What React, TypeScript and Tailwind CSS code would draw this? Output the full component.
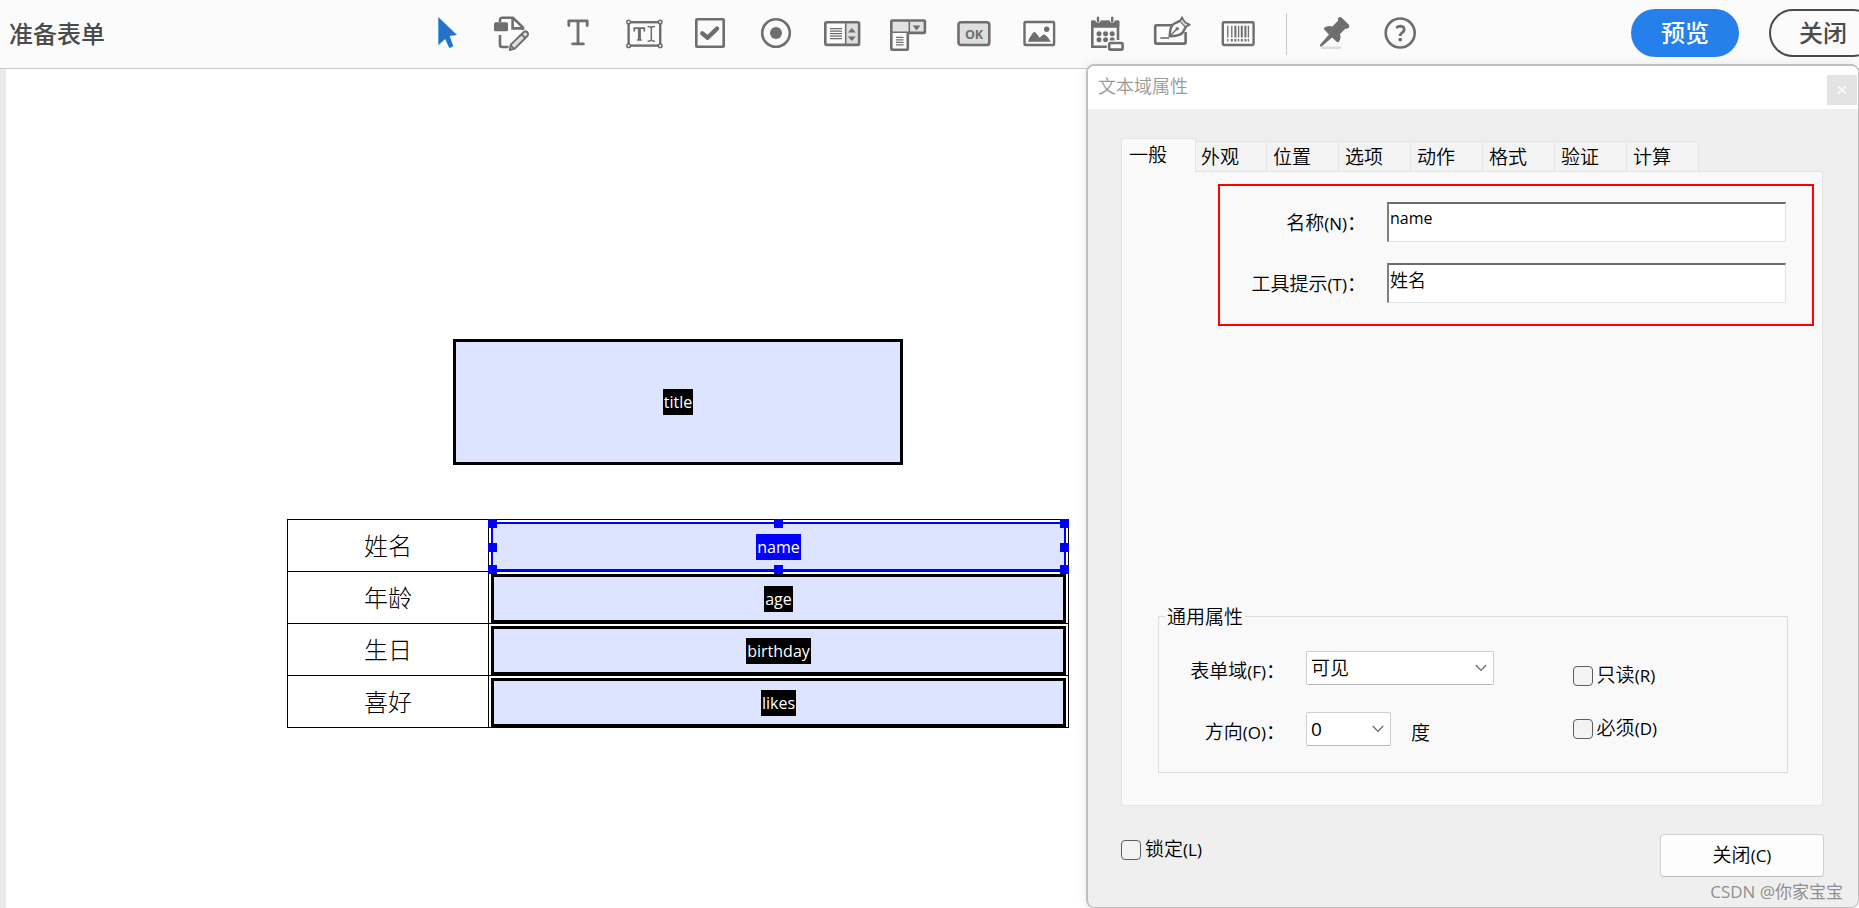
import { useId, useState } from "react";
import type { ReactNode } from "react";

const SANS = "font-['Open_Sans','Noto_Sans_CJK_SC',sans-serif]";

function Icon({ children }: { children: ReactNode }) {
  return (
    <svg viewBox="0 0 40 40" className="size-10" fill="none" stroke="#6e6e6e" strokeWidth="2.6" aria-hidden="true">
      {children}
    </svg>
  );
}

const dots = [12, 18.6, 25.2];

const tools: { label: string; icon: ReactNode }[] = [
  {
    label: "选择",
    icon: <path d="M11.3 3 L30 21 L22.7 22 L26.2 32 Q24.5 34.4 22 33.6 L18.2 25 L11.3 31.3 Z" fill="#2274cb" stroke="none" />,
  },
  {
    label: "编辑",
    icon: (
      <>
        <path d="M7 8 V6 Q7 3.8 9.3 3.8 H20 L30 13.6 V16 M19.6 4 V14.4 H29" />
        <rect x="1" y="8.3" width="14" height="9" rx="1.6" fill="#6e6e6e" stroke="none" />
        <path d="M7 21 V31 Q7 33 9 33 H15.5" />
        <path d="M16.8 36 L17.8 30.6 L30.8 18 Q32.6 16.6 34.4 18.3 Q35.8 20.2 34.6 21.8 L21.8 34.6 Z" fill="#dedede" strokeWidth="2" strokeLinejoin="round" />
        <path d="M28.6 20.4 L32.3 24 M17.6 31.4 L21 34.6" strokeWidth="1.8" />
      </>
    ),
  },
  {
    label: "添加文本",
    icon: (
      <path d="M9.8 11.5 V6.9 H28.2 V11.5 M19 7 V29.5 M13.6 29.9 H24.4" strokeWidth="2.8" strokeLinecap="round" strokeLinejoin="round" />
    ),
  },
  {
    label: "文本域",
    icon: (
      <>
        <rect x="3.6" y="8.2" width="31.6" height="23.4" strokeWidth="2.4" />
        <path d="M9.3 17.5 V14.2 H19.3 V17.5 M12 26 H16.8" strokeWidth="1.7" />
        <path d="M14.4 14.2 V26" strokeWidth="3" />
        <path d="M22.6 12.4 Q26.3 12.4 26.3 14 Q26.3 12.4 30 12.4 M22.6 27.3 Q26.3 27.3 26.3 25.6 Q26.3 27.3 30 27.3 M26.3 14 V26" strokeWidth="1.5" />
        <g fill="#fbfbfb" strokeWidth="1.5">
          <circle cx="3.6" cy="8" r="1.8" />
          <circle cx="35.2" cy="8" r="1.8" />
          <circle cx="3.6" cy="31.8" r="1.8" />
          <circle cx="35.2" cy="31.8" r="1.8" />
        </g>
      </>
    ),
  },
  {
    label: "复选框",
    icon: (
      <>
        <rect x="5.3" y="5.3" width="27.4" height="27.4" rx="0.8" />
        <path d="M11.3 19.4 L16.6 23.8 L26 14.6" strokeWidth="4.4" strokeLinejoin="round" strokeLinecap="round" />
      </>
    ),
  },
  {
    label: "单选按钮",
    icon: (
      <>
        <circle cx="19" cy="19" r="13.8" />
        <circle cx="19" cy="19" r="6" fill="#6e6e6e" stroke="none" />
      </>
    ),
  },
  {
    label: "列表框",
    icon: (
      <>
        <rect x="23" y="8" width="13" height="23" fill="#dedede" stroke="none" />
        <rect x="2.3" y="8.3" width="33.8" height="22.6" rx="1.5" />
        <path d="M22.7 8 V31" strokeWidth="1.6" />
        <path d="M7 14.6 H19 M7 17.1 H19 M7 19.6 H19 M7 22.1 H19 M7 24.6 H19" strokeWidth="1.2" />
        <path d="M28.8 14 L32.8 18.6 H24.8 Z M28.8 27 L24.8 22.4 H32.8 Z" fill="#6e6e6e" stroke="none" />
      </>
    ),
  },
  {
    label: "下拉列表",
    icon: (
      <>
        <rect x="2.3" y="6.5" width="33.6" height="12.4" rx="1" fill="#e2e2e2" />
        <path d="M20.3 6 V19" strokeWidth="1.6" />
        <path d="M27.5 16.4 L23.6 11.6 H31.4 Z" fill="#6e6e6e" stroke="none" />
        <path d="M2.3 18.9 V34.6 Q2.3 35.8 3.5 35.8 H17.6 Q18.8 35.8 18.8 34.6 V18.9" fill="#fbfbfb" />
        <path d="M7 23.4 H14.5 M7 25.9 H14.5 M7 28.4 H14.5 M7 30.9 H14.5" strokeWidth="1.2" />
      </>
    ),
  },
  {
    label: "按钮",
    icon: (
      <>
        <rect x="3.5" y="8.2" width="30.8" height="22.8" rx="2.6" fill="#dedede" />
        <text x="19" y="24.6" textAnchor="middle" fontSize="12.5" fontWeight="700" fill="#6e6e6e" stroke="none" fontFamily="'Open Sans', sans-serif">
          OK
        </text>
      </>
    ),
  },
  {
    label: "图像域",
    icon: (
      <>
        <rect x="3.5" y="8" width="29.6" height="23" rx="1" strokeWidth="2.4" />
        <circle cx="25.7" cy="15.3" r="2.7" fill="#6e6e6e" stroke="none" />
        <path d="M7 27.8 Q8 24 12 18.8 Q13.4 17.2 14.8 18.8 L18.6 23.8 L21.6 21 Q23 20 24.4 21 Q28.4 24.4 29.8 27.8 Z" fill="#6e6e6e" stroke="none" />
      </>
    ),
  },
  {
    label: "日期域",
    icon: (
      <>
        <path d="M20 32.8 H5.3 V8 H31 V26" />
        <rect x="4" y="6.4" width="28.3" height="7.4" rx="1" fill="#6e6e6e" stroke="none" />
        <circle cx="11" cy="6" r="2.6" fill="#fbfbfb" stroke="none" />
        <circle cx="25.2" cy="6" r="2.6" fill="#fbfbfb" stroke="none" />
        <path d="M11 3.6 V7 M25.2 3.6 V7" strokeWidth="2.4" strokeLinecap="round" />
        {dots.map((x) => (
          <g key={x} fill="#6e6e6e" stroke="none">
            <circle cx={x} cy="19.7" r="2.5" />
            <circle cx={x} cy="25.8" r="2.5" />
          </g>
        ))}
        <rect x="19.8" y="26.6" width="18" height="11.4" rx="2" fill="#fbfbfb" stroke="none" />
        <rect x="22.2" y="29" width="13.4" height="6.6" rx="1.4" strokeWidth="2.6" fill="#fbfbfb" />
      </>
    ),
  },
  {
    label: "签名域",
    icon: (
      <>
        <path d="M19 11.2 H3.5 Q2.2 11.2 2.2 12.5 V28.3 Q2.2 29.6 3.5 29.6 H31.3 Q32.6 29.6 32.6 28.3 V18" strokeWidth="2.6" />
        <path d="M7.3 24 H16" strokeWidth="1.6" />
        <path d="M16.6 22.4 Q17.2 12 20.6 10 L27.4 6.6 L32.8 12.8 L29.4 19 Q26 22 16.6 22.4 Z" fill="#fbfbfb" strokeWidth="2.4" strokeLinejoin="round" />
        <path d="M27.2 6.8 L29 3.2 Q31 9 36.8 10.6 L32.8 12.6" fill="#dedede" strokeWidth="1.8" strokeLinejoin="round" />
        <path d="M17 22 L23.6 15.2" strokeWidth="1.4" />
        <circle cx="24.2" cy="14.8" r="1.7" fill="#6e6e6e" stroke="none" />
      </>
    ),
  },
  {
    label: "条形码",
    icon: (
      <>
        <rect x="3.8" y="8.2" width="30.8" height="22.8" rx="1.2" strokeWidth="2.4" />
        <path d="M8.8 11.8 V23.4 M12.8 11.8 V23.4 M19.6 11.8 V23.4 M29.4 11.8 V23.4 M8.8 25 V27.6 M19.6 25 V27.6 M29.4 25 V27.6" strokeWidth="1.3" />
        <path d="M16.4 11.8 V23.4 M22.8 11.8 V23.4 M26.4 11.8 V23.4 M12.8 25 V27.6 M16.4 25 V27.6 M22.8 25 V27.6 M26.4 25 V27.6" strokeWidth="2" />
      </>
    ),
  },
];

const sideTools: { label: string; icon: ReactNode }[] = [
  {
    label: "保持工具选中",
    icon: (
      <>
        <path d="M8 33.8 H26" stroke="#dedede" strokeWidth="2.4" strokeLinecap="round" />
        <path
          d="M25 3.2 Q26.6 2.6 28 4 L34.6 10.6 Q35.8 12 35 13.6 Q33.4 15.2 31.6 14.4 L26 20 Q27.6 24.6 24.6 28 Q23.6 28.8 22.6 27.8 L18 23.4 L8 32.2 L5.8 32.6 L6.2 30.4 L15 20.4 L10.4 15.8 Q9.4 14.6 10.4 13.6 Q14 11 18.4 12.4 L24 6.8 Q23.4 4.6 25 3.2 Z"
          fill="#6e6e6e"
          stroke="none"
        />
      </>
    ),
  },
  {
    label: "帮助",
    icon: (
      <>
        <circle cx="20.2" cy="19" r="14.5" />
        <path d="M16.2 14 Q18 12.2 20.6 12.2 Q24.2 12.4 24.2 15.4 Q24.2 17.2 22.2 18.6 Q20.2 20 20.2 22" strokeWidth="2.8" />
        <circle cx="20.2" cy="25.6" r="1.9" fill="#6e6e6e" stroke="none" />
      </>
    ),
  },
];

function ToolButton({ label, children }: { label: string; children: ReactNode }) {
  return (
    <button type="button" aria-label={label} className="size-10 shrink-0">
      <Icon>{children}</Icon>
    </button>
  );
}

function Header() {
  return (
    <header className="flex h-[69px] items-center overflow-hidden border-b border-[#c8c8c8] bg-[#fbfbfb] pb-px text-[#4b4b4b]">
      <h1 className="w-[427px] shrink-0 pl-[9px] text-2xl font-medium">准备表单</h1>
      <div className="flex items-center gap-[26px]">
        {tools.map((tool) => (
          <ToolButton key={tool.label} label={tool.label}>
            {tool.icon}
          </ToolButton>
        ))}
        <div className="mx-px h-[42px] w-px bg-[#c8c8c8]" />
        {sideTools.map((tool) => (
          <ToolButton key={tool.label} label={tool.label}>
            {tool.icon}
          </ToolButton>
        ))}
      </div>
      <div className="-mr-[18px] ml-auto flex shrink-0 gap-[30px] pb-[2px]">
        <button type="button" className="h-12 w-[108px] rounded-full bg-[#2680eb] text-2xl font-medium text-white">
          预览
        </button>
        <button type="button" className="h-12 w-[108px] rounded-full border-2 border-[#4b4b4b] text-2xl font-medium">
          关闭
        </button>
      </div>
    </header>
  );
}

function FieldTag({ name, selected }: { name: string; selected?: boolean }) {
  return (
    <span className={`px-px text-base leading-[26px] text-white ${selected ? "bg-[#0000ff]" : "bg-black"}`}>{name}</span>
  );
}

const handles = [
  "-left-[5px] -top-[5px]",
  "left-1/2 -ml-[5px] -top-[5px]",
  "-right-[5px] -top-[5px]",
  "-left-[5px] top-1/2 -mt-1",
  "-right-[5px] top-1/2 -mt-1",
  "-left-[5px] -bottom-[5px]",
  "left-1/2 -ml-[5px] -bottom-[5px]",
  "-right-[5px] -bottom-[5px]",
];

const rows = [
  { label: "姓名", field: "name", selected: true },
  { label: "年龄", field: "age", selected: false },
  { label: "生日", field: "birthday", selected: false },
  { label: "喜好", field: "likes", selected: false },
];

function FormPage() {
  return (
    <main className="flex flex-1 flex-col border-l-[6px] border-[#e9e9e9] bg-white pt-[270px] text-black">
      <div className="ml-[281px] flex w-[782px] flex-col items-center">
        <div className="flex h-[126px] w-[450px] items-center justify-center border-[3px] border-black bg-[#dce4ff]">
          <FieldTag name="title" />
        </div>
        <table className="mt-[54px] w-full table-fixed border-collapse border border-black">
          <tbody>
            {rows.map((row) => (
              <tr key={row.field} className="h-[52px] border-b border-black">
                <th className="w-[201px] border-r border-black p-0 text-center text-2xl font-light">{row.label}</th>
                <td className="p-0 pt-[2px] pr-[2px] pl-[2px]">
                  <div
                    className={`relative flex h-[49px] items-center justify-center bg-[#dce4ff] ${
                      row.selected ? "border-2 border-[#0000ff]" : "border-[3px] border-black"
                    }`}
                  >
                    <FieldTag name={row.field} selected={row.selected} />
                    {row.selected &&
                      handles.map((place) => <span key={place} className={`absolute z-10 size-[9px] bg-[#0000ff] ${place}`} />)}
                  </div>
                </td>
              </tr>
            ))}
          </tbody>
        </table>
      </div>
    </main>
  );
}

const tabs = ["一般", "外观", "位置", "选项", "动作", "格式", "验证", "计算"];

function Caption({ text, letter, colon }: { text: string; letter: string; colon?: boolean }) {
  return (
    <>
      {text}
      <span className="text-[17px] font-normal">({letter})</span>
      {colon && "："}
    </>
  );
}

function TextRow({
  text,
  letter,
  value,
  font,
  onChange,
}: {
  text: string;
  letter: string;
  value: string;
  font: string;
  onChange: (v: string) => void;
}) {
  const id = useId();
  return (
    <div className="flex items-center">
      <label htmlFor={id} className="w-[146px] shrink-0 pt-1 text-right">
        <Caption text={text} letter={letter} colon />
      </label>
      <input
        id={id}
        value={value}
        onChange={(e) => onChange(e.target.value)}
        className={`ml-[21px] h-10 min-w-0 flex-1 border-t-2 border-r border-b border-l-2 border-t-[#6b6b6b] border-r-[#e0e0e0] border-b-[#e0e0e0] border-l-[#808080] bg-white pb-2 pl-px outline-none ${font}`}
      />
    </div>
  );
}

function SelectRow({
  text,
  letter,
  options,
  look,
  unit,
}: {
  text: string;
  letter: string;
  options: string[];
  look: string;
  unit?: string;
}) {
  const id = useId();
  return (
    <div className="flex items-center">
      <label htmlFor={id} className="w-[126px] shrink-0 pt-2 text-right">
        <Caption text={text} letter={letter} colon />
      </label>
      <div className={`relative ml-[21px] ${look}`}>
        <select
          id={id}
          className="block h-[34px] w-full appearance-none rounded-xs border border-[#cfcfcf] border-b-[#b8b8b8] bg-white pl-1 leading-7 outline-none"
        >
          {options.map((option) => (
            <option key={option}>{option}</option>
          ))}
        </select>
        <svg viewBox="0 0 12 8" className="pointer-events-none absolute top-[13px] right-[7px] h-2 w-3" fill="none" stroke="#666" strokeWidth="1.2" aria-hidden="true">
          <path d="M0.8 1 L6 6.4 L11.2 1" />
        </svg>
      </div>
      {unit && <span className="ml-5 pt-2">{unit}</span>}
    </div>
  );
}

function CheckRow({ text, letter }: { text: string; letter: string }) {
  return (
    <label className="flex items-center gap-1">
      <input type="checkbox" className="size-5 appearance-none rounded-sm border border-[#5f5f5f] bg-[#f3f3f3] checked:bg-[#2680eb]" />
      <span>
        <Caption text={text} letter={letter} />
      </span>
    </label>
  );
}

function PropertiesDialog() {
  const [tab, setTab] = useState("一般");
  const [name, setName] = useState("name");
  const [tip, setTip] = useState("姓名");
  return (
    <section
      role="dialog"
      aria-label="文本域属性"
      className="absolute top-16 right-0 bottom-0 z-20 flex w-[773px] flex-col overflow-hidden rounded-lg border-2 border-r border-b border-[#c0c0c0] bg-[#efefef] text-[19px] leading-7 font-[350] text-black shadow-[0_0_12px_rgba(0,0,0,0.08)]"
    >
      <div className="flex h-[43px] shrink-0 items-center justify-between bg-white pl-[10px]">
        <h2 className="pb-1 text-lg text-[#999]">文本域属性</h2>
        <button type="button" aria-label="关闭" className="mt-[5px] mr-px flex size-[30px] items-center justify-center bg-[#e3e3e3]">
          <svg viewBox="0 0 10 10" className="size-[10px]" stroke="#f6f6f6" strokeWidth="2" aria-hidden="true">
            <path d="M1 1.5 L9 8.5 M9 1.5 L1 8.5" />
          </svg>
        </button>
      </div>

      <div className="flex flex-1 flex-col pt-[29px] pr-[35px] pl-[33px]">
        <div role="tablist" className="flex items-end">
          {tabs.map((t) =>
            t === tab ? (
              <button key={t} type="button" role="tab" aria-selected="true" className="z-10 -mr-px -mb-px h-[34px] w-[75px] border border-b-0 border-[#e5e5e5] bg-[#f9f9f9] pb-[2px] pl-[7px] text-left">
                {t}
              </button>
            ) : (
              <button key={t} type="button" role="tab" aria-selected="false" onClick={() => setTab(t)} className="h-[30px] w-[72px] border-t border-r border-[#e5e5e5] bg-[#f3f3f3] pl-[6px] text-left">
                {t}
              </button>
            ),
          )}
        </div>

        <div role="tabpanel" className="flex flex-1 flex-col justify-between border border-[#e5e5e5] bg-[#f9f9f9] pt-3 pr-2 pb-8 pl-9">
          <div className="ml-[60px] flex h-[142px] flex-col justify-center gap-[21px] border-2 border-[#ff0000] pr-[26px] pb-[6px]">
            <TextRow text="名称" letter="N" value={name} font="text-base font-normal" onChange={setName} />
            <TextRow text="工具提示" letter="T" value={tip} font="text-lg" onChange={setTip} />
          </div>

          <fieldset className="mr-[26px] flex h-[172px] justify-between border border-[#dcdcdc] pr-[130px]">
            <legend className="ml-[6px] px-[2px] pt-[2px]">通用属性</legend>
            <div className="flex flex-col gap-6 pt-[18px]">
              <SelectRow text="表单域" letter="F" options={["可见", "隐藏"]} look="w-[188px]" />
              <SelectRow text="方向" letter="O" options={["0", "90", "180", "270"]} look="w-[85px] font-normal" unit="度" />
            </div>
            <div className="flex flex-col gap-6 pt-[30px]">
              <CheckRow text="只读" letter="R" />
              <CheckRow text="必须" letter="D" />
            </div>
          </fieldset>
        </div>

        <div className="flex h-[101px] shrink-0 justify-between pt-[28px]">
          <div className="pt-px">
            <CheckRow text="锁定" letter="L" />
          </div>
          <button type="button" className="-mr-px h-[43px] w-[164px] rounded-sm border border-[#d0d0d0] border-b-[#bcbcbc] bg-[#fdfdfd]">
            <Caption text="关闭" letter="C" />
          </button>
        </div>
      </div>
    </section>
  );
}

export default function App() {
  return (
    <div lang="zh-CN" className={`relative flex min-h-screen flex-col overflow-hidden bg-white ${SANS}`}>
      <Header />
      <FormPage />
      <PropertiesDialog />
      <p className="absolute right-4 bottom-1 z-30 text-[17px] leading-6 text-[#8f8f8f]">CSDN @你家宝宝</p>
    </div>
  );
}
